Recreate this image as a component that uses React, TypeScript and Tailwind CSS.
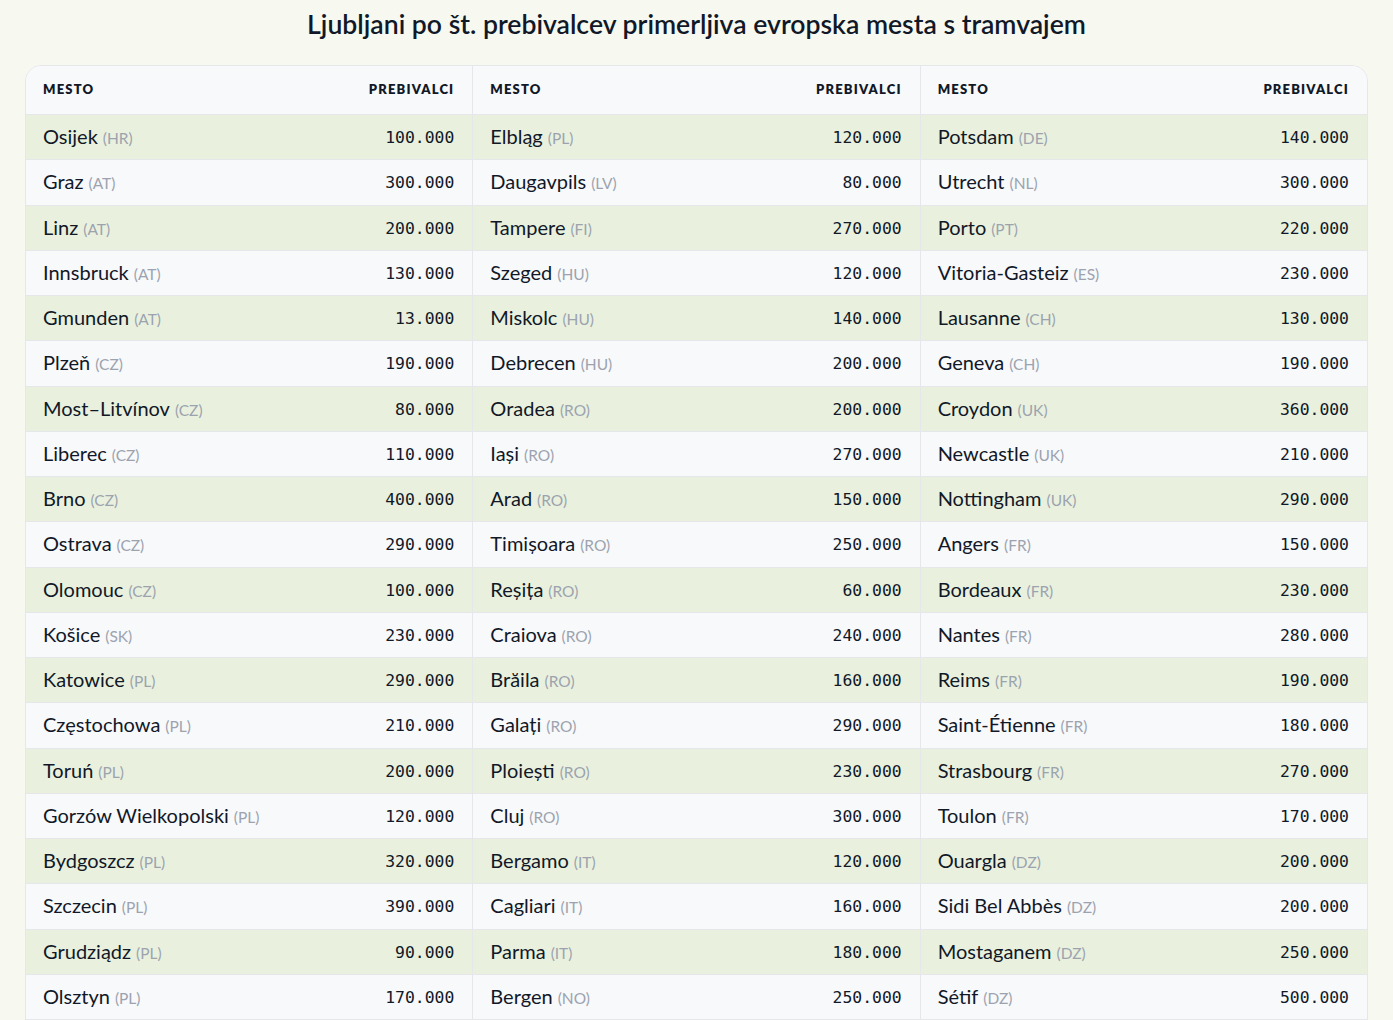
type City = { name: string; cc: string; pop: string };

const c = (name: string, cc: string, pop: string): City => ({ name, cc, pop });

const col1: City[] = [
  c("Osijek", "HR", "100.000"),
  c("Graz", "AT", "300.000"),
  c("Linz", "AT", "200.000"),
  c("Innsbruck", "AT", "130.000"),
  c("Gmunden", "AT", "13.000"),
  c("Plzeň", "CZ", "190.000"),
  c("Most–Litvínov", "CZ", "80.000"),
  c("Liberec", "CZ", "110.000"),
  c("Brno", "CZ", "400.000"),
  c("Ostrava", "CZ", "290.000"),
  c("Olomouc", "CZ", "100.000"),
  c("Košice", "SK", "230.000"),
  c("Katowice", "PL", "290.000"),
  c("Częstochowa", "PL", "210.000"),
  c("Toruń", "PL", "200.000"),
  c("Gorzów Wielkopolski", "PL", "120.000"),
  c("Bydgoszcz", "PL", "320.000"),
  c("Szczecin", "PL", "390.000"),
  c("Grudziądz", "PL", "90.000"),
  c("Olsztyn", "PL", "170.000"),
];

const col2: City[] = [
  c("Elbląg", "PL", "120.000"),
  c("Daugavpils", "LV", "80.000"),
  c("Tampere", "FI", "270.000"),
  c("Szeged", "HU", "120.000"),
  c("Miskolc", "HU", "140.000"),
  c("Debrecen", "HU", "200.000"),
  c("Oradea", "RO", "200.000"),
  c("Iași", "RO", "270.000"),
  c("Arad", "RO", "150.000"),
  c("Timișoara", "RO", "250.000"),
  c("Reșița", "RO", "60.000"),
  c("Craiova", "RO", "240.000"),
  c("Brăila", "RO", "160.000"),
  c("Galați", "RO", "290.000"),
  c("Ploiești", "RO", "230.000"),
  c("Cluj", "RO", "300.000"),
  c("Bergamo", "IT", "120.000"),
  c("Cagliari", "IT", "160.000"),
  c("Parma", "IT", "180.000"),
  c("Bergen", "NO", "250.000"),
];

const col3: City[] = [
  c("Potsdam", "DE", "140.000"),
  c("Utrecht", "NL", "300.000"),
  c("Porto", "PT", "220.000"),
  c("Vitoria-Gasteiz", "ES", "230.000"),
  c("Lausanne", "CH", "130.000"),
  c("Geneva", "CH", "190.000"),
  c("Croydon", "UK", "360.000"),
  c("Newcastle", "UK", "210.000"),
  c("Nottingham", "UK", "290.000"),
  c("Angers", "FR", "150.000"),
  c("Bordeaux", "FR", "230.000"),
  c("Nantes", "FR", "280.000"),
  c("Reims", "FR", "190.000"),
  c("Saint-Étienne", "FR", "180.000"),
  c("Strasbourg", "FR", "270.000"),
  c("Toulon", "FR", "170.000"),
  c("Ouargla", "DZ", "200.000"),
  c("Sidi Bel Abbès", "DZ", "200.000"),
  c("Mostaganem", "DZ", "250.000"),
  c("Sétif", "DZ", "500.000"),
];

const groups = [col1, col2, col3];

const sans = { fontFamily: "Lato, 'Liberation Sans', sans-serif" };

function Group({ rows, first }: { rows: City[]; first: boolean }) {
  return (
    <div className={first ? "flex-1" : "flex-1 border-l border-[#e5e7eb]"}>
      <div className="h-[49px] bg-[#f8f9fb] pl-[17px] pr-[18px] flex items-center justify-between text-[13px] font-extrabold tracking-[0.09em] text-[#111827] border-b border-[#e5e7eb]">
        <span>MESTO</span>
        <span>PREBIVALCI</span>
      </div>
      {rows.map((r, i) => (
        <div
          key={r.name}
          className={`h-[45.25px] pl-[17px] pr-[18px] flex items-baseline justify-between border-b border-[#e5e7eb] ${
            i % 2 === 0 ? "bg-[#e9f1de]" : "bg-[#f8f9fb]"
          }`}
        >
          <span className="text-[20px] leading-[42px] text-[#111827]">
            {r.name}
            <span className="ml-[5px] text-[15.5px] text-[#9ca3af]">({r.cc})</span>
          </span>
          <span
            className="text-[16.4px] leading-[20px] text-[#111827] -translate-y-[1px]"
            style={{ fontFamily: "'DejaVu Sans Mono', 'Liberation Mono', monospace" }}
          >
            {r.pop}
          </span>
        </div>
      ))}
    </div>
  );
}

export default function App() {
  return (
    <div className="min-h-screen bg-[#f7f9f1] px-[25px]" style={sans}>
      <h1 className="text-center text-[26.6px] font-semibold text-[#111827] pt-[6px] pb-[23px] leading-[36px]">
        Ljubljani po št. prebivalcev primerljiva evropska mesta s tramvajem
      </h1>
      <div className="rounded-t-[16px] border border-[#e5e7eb] overflow-hidden flex">
        {groups.map((g, i) => (
          <Group key={i} rows={g} first={i === 0} />
        ))}
      </div>
    </div>
  );
}
